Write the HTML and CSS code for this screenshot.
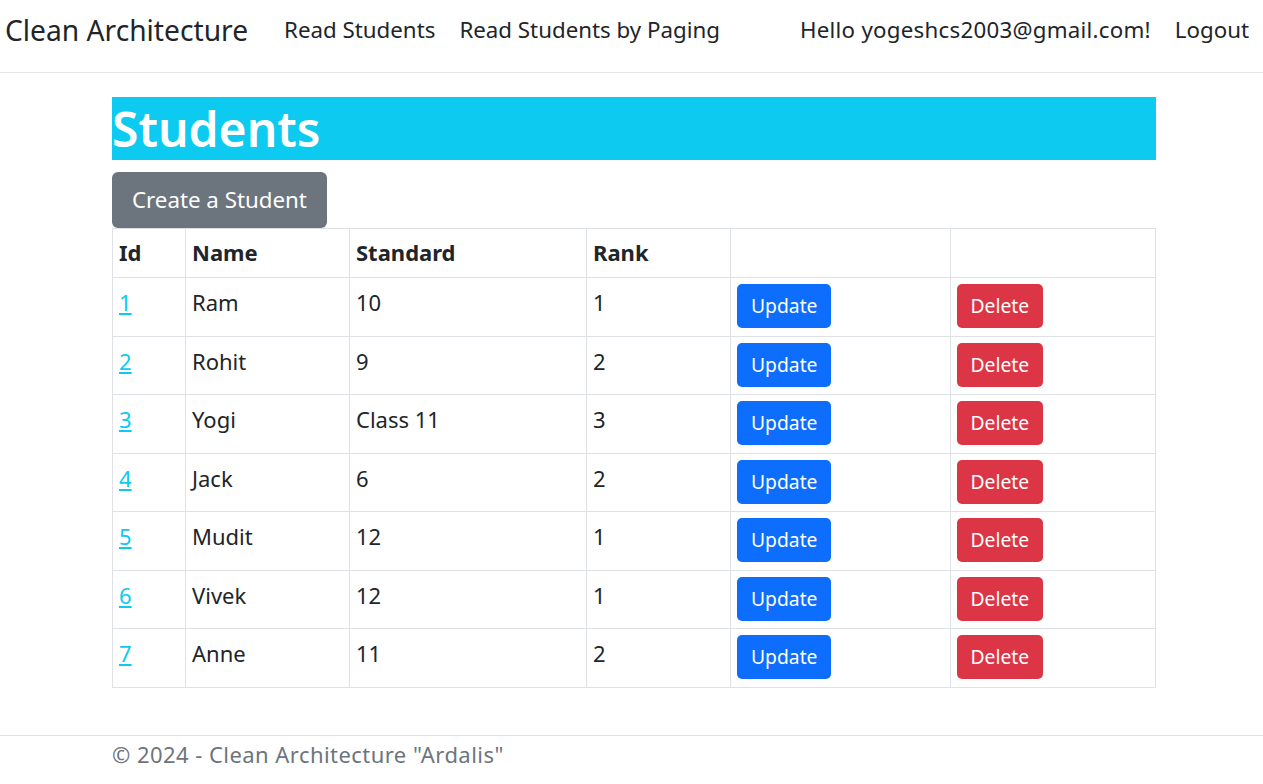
FILE: index.html
```html
<!DOCTYPE html>
<html lang="en">
<head>
<meta charset="utf-8">
<title>Students - Clean Architecture</title>
<link rel="stylesheet" href="styles.css">
</head>
<body>
<header class="navbar">
  <a class="brand" href="#">Clean Architecture</a>
  <nav class="nav-main">
    <a class="nav-link" href="#">Read Students</a>
    <a class="nav-link" href="#">Read Students by Paging</a>
  </nav>
  <nav class="nav-user">
    <a class="nav-link user-link" href="#">Hello yogeshcs2003@gmail.com!</a>
    <a class="nav-link" href="#">Logout</a>
  </nav>
</header>
<main class="container">
  <h1 class="title">Students</h1>
  <a class="btn btn-secondary" href="#">Create a Student</a>
  <table class="table">
    <thead>
      <tr><th class="c-id">Id</th><th class="c-name">Name</th><th class="c-std">Standard</th><th class="c-rank">Rank</th><th class="c-up"></th><th class="c-del"></th></tr>
    </thead>
    <tbody>
      <tr><td><a class="link" href="#">1</a></td><td>Ram</td><td>10</td><td>1</td><td><a class="btn-sm btn-primary" href="#">Update</a></td><td><a class="btn-sm btn-danger" href="#">Delete</a></td></tr>
      <tr><td><a class="link" href="#">2</a></td><td>Rohit</td><td>9</td><td>2</td><td><a class="btn-sm btn-primary" href="#">Update</a></td><td><a class="btn-sm btn-danger" href="#">Delete</a></td></tr>
      <tr><td><a class="link" href="#">3</a></td><td>Yogi</td><td>Class 11</td><td>3</td><td><a class="btn-sm btn-primary" href="#">Update</a></td><td><a class="btn-sm btn-danger" href="#">Delete</a></td></tr>
      <tr><td><a class="link" href="#">4</a></td><td>Jack</td><td>6</td><td>2</td><td><a class="btn-sm btn-primary" href="#">Update</a></td><td><a class="btn-sm btn-danger" href="#">Delete</a></td></tr>
      <tr><td><a class="link" href="#">5</a></td><td>Mudit</td><td>12</td><td>1</td><td><a class="btn-sm btn-primary" href="#">Update</a></td><td><a class="btn-sm btn-danger" href="#">Delete</a></td></tr>
      <tr><td><a class="link" href="#">6</a></td><td>Vivek</td><td>12</td><td>1</td><td><a class="btn-sm btn-primary" href="#">Update</a></td><td><a class="btn-sm btn-danger" href="#">Delete</a></td></tr>
      <tr><td><a class="link" href="#">7</a></td><td>Anne</td><td>11</td><td>2</td><td><a class="btn-sm btn-primary" href="#">Update</a></td><td><a class="btn-sm btn-danger" href="#">Delete</a></td></tr>
    </tbody>
  </table>
</main>
<footer class="footer">
  <div class="footer-inner">&copy; 2024 - Clean Architecture "Ardalis"</div>
</footer>
</body>
</html>
```
FILE: styles.css
```css
* { box-sizing: border-box; }
html, body { margin: 0; padding: 0; }
body {
  font-family: "Noto Sans", "Open Sans", sans-serif;
  font-size: 22px;
  line-height: 1.5;
  color: #212529;
  background: #fff;
  height: 784px;
  overflow: hidden;
}
a { text-decoration: none; }

.navbar {
  display: flex;
  align-items: center;
  height: 73px;
  padding: 0 2px 12px 5px;
  border-bottom: 1px solid #e5e5e5;
}
.brand {
  font-size: 28.2px;
  color: #212529;
  margin-right: 24px;
  white-space: nowrap;
}
.nav-main, .nav-user { display: flex; }
.nav-main { flex: 1; }
.nav-link {
  color: #212529;
  padding: 0 12px;
  font-size: 22.3px;
  white-space: nowrap;
}
.user-link { letter-spacing: 0.25px; }

.container {
  padding: 24px 107px 0 112px;
}
.title {
  margin: 0 0 12px;
  height: 63px;
  background: #0dcaf0;
  color: #fff;
  font-size: 48px;
  line-height: 63px;
  font-weight: 600;
}
.btn {
  display: inline-block;
  font-size: 22.3px;
  line-height: 34px;
  padding: 11px 20px;
  border-radius: 6px;
  color: #fff;
}
.btn-secondary { background: #6c757d; }

.table {
  width: 100%;
  border-collapse: collapse;
  margin-top: 0;
}
.table th, .table td {
  border: 1px solid #dee2e6;
  padding: 6px 6px;
  text-align: left;
  vertical-align: top;
  line-height: 37px;
}
.table th { font-weight: 700; height: 49px; padding: 5px 6px 6px; }
.table td { height: 58.5px; }
.c-id { width: 73px; }
.c-name { width: 164px; }
.c-std { width: 237px; }
.c-rank { width: 144px; }
.c-up { width: 220px; }
.link { color: #0dcaf0; text-decoration: underline; }

.btn-sm {
  display: inline-block;
  vertical-align: top;
  font-size: 19.3px;
  line-height: 30px;
  padding: 7px 14px;
  border-radius: 5px;
  color: #fff;
}
.btn-primary { background: #0d6efd; }
.btn-danger { background: #dc3545; padding: 7px 13.5px; }

.footer {
  position: absolute;
  top: 735px;
  left: 0;
  right: 0;
  border-top: 1px solid #dee2e6;
}
.footer-inner {
  padding: 1px 0 0 112px;
  color: #6c757d;
  font-size: 22px;
  letter-spacing: 0.45px;
  line-height: 34px;
}
```
